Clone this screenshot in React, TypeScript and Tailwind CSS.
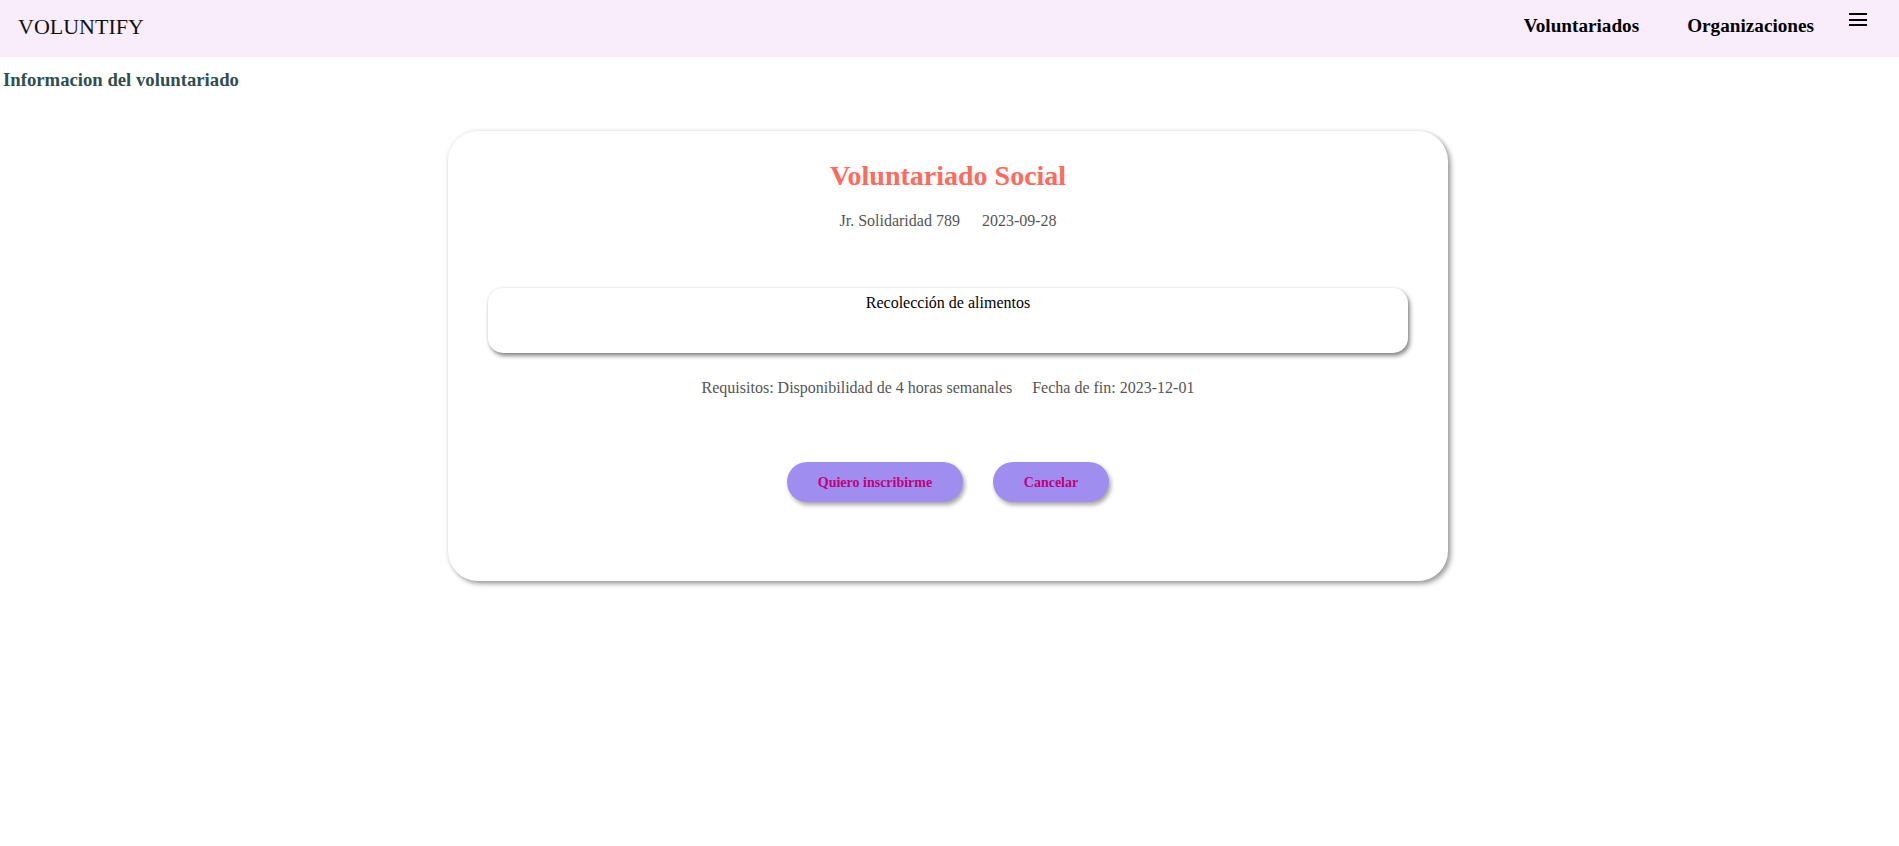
import React from 'react';

const Navbar: React.FC = () => {
  return (
    <nav className="h-[57px] bg-[#faedfb] flex items-start justify-between pl-[18px] pr-[32px]">
      <span className="mt-[14px] text-[22px] leading-[25px] text-[#111]">VOLUNTIFY</span>
      <div className="flex items-start">
        <a className="mt-[15px] text-[19.2px] leading-[22px] font-bold text-black">Voluntariados</a>
        <a className="mt-[15px] ml-[48px] text-[19.2px] leading-[22px] font-bold text-black">Organizaciones</a>
        {/* menu icon */}
        <button className="ml-[35px] mt-[13px] w-[18px] flex flex-col gap-[3.5px]" aria-label="menu">
          <span className="block h-[2px] w-full bg-black"></span>
          <span className="block h-[2px] w-full bg-black"></span>
          <span className="block h-[2px] w-full bg-black"></span>
        </button>
      </div>
    </nav>
  );
};

const App: React.FC = () => {
  return (
    <div className="min-h-screen bg-white font-['Liberation_Serif','Times_New_Roman',serif]">
      <Navbar />

      <h3 className="mt-[12px] ml-[3px] text-[18.72px] leading-[21px] font-bold text-[#2f4f4f]">
        Informacion del voluntariado
      </h3>

      <div className="flex justify-center pr-[3px]">
        <div className="w-[1000px] mt-[41px] pt-[29px] pb-[79px] px-[40px] bg-white rounded-[30px] shadow-[0_0_4px_rgba(0,0,0,0.12),3px_3px_5px_rgba(0,0,0,0.35)] flex flex-col items-center">
          <h2 className="text-[28px] leading-[31px] font-bold text-[#ff6a5c]">Voluntariado Social</h2>
          <div className="mt-[21px] flex gap-[22px] text-[16px] leading-[18px] text-[#555]">
            <span>Jr. Solidaridad 789</span>
            <span>2023-09-28</span>
          </div>

          <div className="mt-[58px] w-full h-[65px] pt-[6px] rounded-[15px] bg-white shadow-[0_0_3px_rgba(0,0,0,0.12),2px_3px_4px_rgba(0,0,0,0.45)] text-center text-[16px] leading-[18px] text-black">
            Recolección de alimentos
          </div>

          <div className="mt-[26px] flex gap-[20px] text-[16px] leading-[18px] text-[#555]">
            <span>Requisitos: Disponibilidad de 4 horas semanales</span>
            <span>Fecha de fin: 2023-12-01</span>
          </div>

          <div className="mt-[65px] flex gap-[30px]">
            <button className="w-[176px] h-[40px] rounded-full bg-[#9f8eef] text-[14px] font-bold text-[#c3007c] shadow-[2px_3px_4px_rgba(0,0,0,0.35)]">
              Quiero inscribirme
            </button>
            <button className="w-[116px] h-[40px] rounded-full bg-[#9f8eef] text-[14px] font-bold text-[#c3007c] shadow-[2px_3px_4px_rgba(0,0,0,0.35)]">
              Cancelar
            </button>
          </div>
        </div>
      </div>
    </div>
  );
};

export default App;
